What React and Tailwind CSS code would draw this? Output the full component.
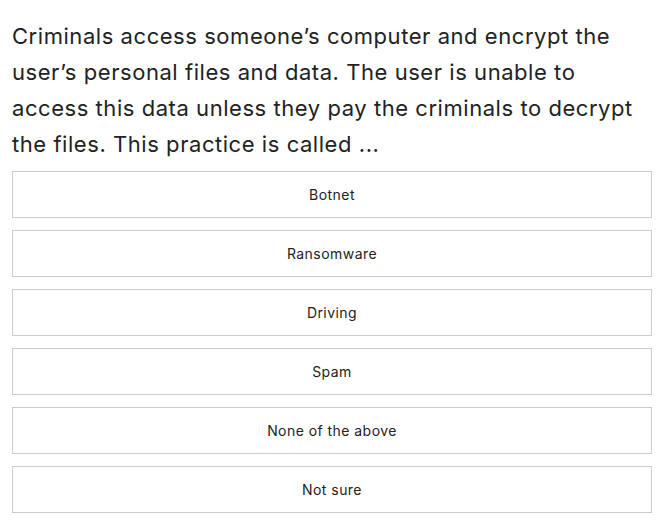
import React from 'react';

const options = ['Botnet', 'Ransomware', 'Driving', 'Spam', 'None of the above', 'Not sure'];

export default function App() {
  return (
    <div className="bg-white min-h-[527px] w-[665px] px-3 pt-[18px]" style={{ fontFamily: 'Inter, "Liberation Sans", sans-serif' }}>
      <p className="text-[22px] leading-[36px] tracking-[0.55px] text-[#222]">
        Criminals access someone’s computer and encrypt the user’s personal files and data. The user is unable to access this data unless they pay the criminals to decrypt the files. This practice is called ...
      </p>
      <div className="mt-[9px] flex flex-col gap-3 w-[640px]">
        {options.map((o) => (
          <button
            key={o}
            className="h-[47px] border border-[#ccc] bg-white text-[14px] tracking-[0.45px] text-[#222] flex items-center justify-center"
          >
            {o}
          </button>
        ))}
      </div>
    </div>
  );
}
